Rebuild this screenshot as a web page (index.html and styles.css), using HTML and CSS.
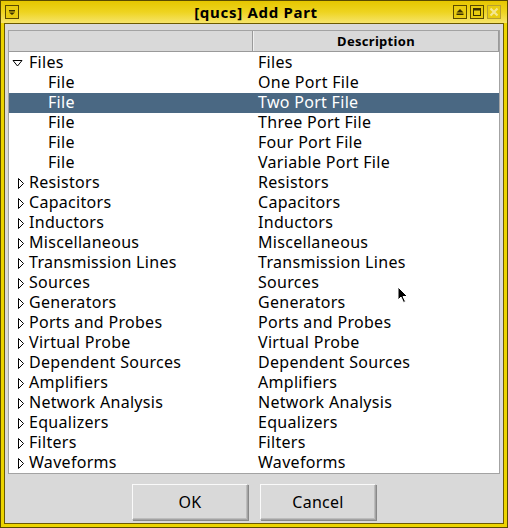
FILE: index.html
```html
<!DOCTYPE html>
<html>
<head>
<meta charset="utf-8">
<link rel="stylesheet" href="styles.css">
</head>
<body>
<div class="window">
  <div class="titlebar">
    <div class="tleft"><div class="tbtn"><svg width="12" height="12" viewBox="0 0 12 12"><rect x="3" y="4" width="6" height="1.5" fill="#3a3000"/><path d="M3 6.5 H9 L6 9 Z" fill="#3a3000"/></svg></div></div>
    <div class="title">[qucs] Add Part</div>
    <div class="tbtns">
      <div class="tbtn"><svg width="12" height="12" viewBox="0 0 12 12"><path d="M2.5 6.5 L6 3 L9.5 6.5 Z" fill="#3a3000"/><rect x="2.5" y="7.5" width="7" height="1.5" fill="#3a3000"/></svg></div>
      <div class="tbtn"><svg width="12" height="12" viewBox="0 0 12 12"><rect x="2.5" y="2.5" width="7" height="7" fill="none" stroke="#3a3000" stroke-width="1"/><rect x="2.5" y="2.5" width="7" height="2" fill="#3a3000"/></svg></div>
      <div class="tbtn close"><svg width="12" height="12" viewBox="0 0 12 12"><path d="M2.5 2.5 L9.5 9.5 M9.5 2.5 L2.5 9.5" stroke="#f4e690" stroke-width="2.2"/></svg></div>
    </div>
  </div>
  <div class="client">
    <div class="tree">
      <div class="header">
        <div class="hcell c1"></div>
        <div class="hcell c2">Description</div>
      </div>
      <div class="rows">
        <div class="row"><div class="c1"><span class="arrow"><svg width="11" height="8" viewBox="0 0 11 8"><path d="M1 1.5 H10 L5.5 7 Z" fill="none" stroke="#000" stroke-width="1"/></svg></span><span class="lbl">Files</span></div><div class="c2">Files</div></div>
        <div class="row child"><div class="c1"><span class="lbl">File</span></div><div class="c2">One Port File</div></div>
        <div class="row child sel"><div class="c1"><span class="lbl">File</span></div><div class="c2">Two Port File</div></div>
        <div class="row child"><div class="c1"><span class="lbl">File</span></div><div class="c2">Three Port File</div></div>
        <div class="row child"><div class="c1"><span class="lbl">File</span></div><div class="c2">Four Port File</div></div>
        <div class="row child"><div class="c1"><span class="lbl">File</span></div><div class="c2">Variable Port File</div></div>
        <div class="row closed"><div class="c1"><span class="arrow"><svg width="6" height="11" viewBox="0 0 6 11"><path d="M0.5 0.5 V10.5 L5.5 5.5 Z" fill="none" stroke="#000" stroke-width="1"/></svg></span><span class="lbl">Resistors</span></div><div class="c2">Resistors</div></div>
        <div class="row closed"><div class="c1"><span class="arrow"><svg width="6" height="11" viewBox="0 0 6 11"><path d="M0.5 0.5 V10.5 L5.5 5.5 Z" fill="none" stroke="#000" stroke-width="1"/></svg></span><span class="lbl">Capacitors</span></div><div class="c2">Capacitors</div></div>
        <div class="row closed"><div class="c1"><span class="arrow"><svg width="6" height="11" viewBox="0 0 6 11"><path d="M0.5 0.5 V10.5 L5.5 5.5 Z" fill="none" stroke="#000" stroke-width="1"/></svg></span><span class="lbl">Inductors</span></div><div class="c2">Inductors</div></div>
        <div class="row closed"><div class="c1"><span class="arrow"><svg width="6" height="11" viewBox="0 0 6 11"><path d="M0.5 0.5 V10.5 L5.5 5.5 Z" fill="none" stroke="#000" stroke-width="1"/></svg></span><span class="lbl">Miscellaneous</span></div><div class="c2">Miscellaneous</div></div>
        <div class="row closed"><div class="c1"><span class="arrow"><svg width="6" height="11" viewBox="0 0 6 11"><path d="M0.5 0.5 V10.5 L5.5 5.5 Z" fill="none" stroke="#000" stroke-width="1"/></svg></span><span class="lbl">Transmission Lines</span></div><div class="c2">Transmission Lines</div></div>
        <div class="row closed"><div class="c1"><span class="arrow"><svg width="6" height="11" viewBox="0 0 6 11"><path d="M0.5 0.5 V10.5 L5.5 5.5 Z" fill="none" stroke="#000" stroke-width="1"/></svg></span><span class="lbl">Sources</span></div><div class="c2">Sources</div></div>
        <div class="row closed"><div class="c1"><span class="arrow"><svg width="6" height="11" viewBox="0 0 6 11"><path d="M0.5 0.5 V10.5 L5.5 5.5 Z" fill="none" stroke="#000" stroke-width="1"/></svg></span><span class="lbl">Generators</span></div><div class="c2">Generators</div></div>
        <div class="row closed"><div class="c1"><span class="arrow"><svg width="6" height="11" viewBox="0 0 6 11"><path d="M0.5 0.5 V10.5 L5.5 5.5 Z" fill="none" stroke="#000" stroke-width="1"/></svg></span><span class="lbl">Ports and Probes</span></div><div class="c2">Ports and Probes</div></div>
        <div class="row closed"><div class="c1"><span class="arrow"><svg width="6" height="11" viewBox="0 0 6 11"><path d="M0.5 0.5 V10.5 L5.5 5.5 Z" fill="none" stroke="#000" stroke-width="1"/></svg></span><span class="lbl">Virtual Probe</span></div><div class="c2">Virtual Probe</div></div>
        <div class="row closed"><div class="c1"><span class="arrow"><svg width="6" height="11" viewBox="0 0 6 11"><path d="M0.5 0.5 V10.5 L5.5 5.5 Z" fill="none" stroke="#000" stroke-width="1"/></svg></span><span class="lbl">Dependent Sources</span></div><div class="c2">Dependent Sources</div></div>
        <div class="row closed"><div class="c1"><span class="arrow"><svg width="6" height="11" viewBox="0 0 6 11"><path d="M0.5 0.5 V10.5 L5.5 5.5 Z" fill="none" stroke="#000" stroke-width="1"/></svg></span><span class="lbl">Amplifiers</span></div><div class="c2">Amplifiers</div></div>
        <div class="row closed"><div class="c1"><span class="arrow"><svg width="6" height="11" viewBox="0 0 6 11"><path d="M0.5 0.5 V10.5 L5.5 5.5 Z" fill="none" stroke="#000" stroke-width="1"/></svg></span><span class="lbl">Network Analysis</span></div><div class="c2">Network Analysis</div></div>
        <div class="row closed"><div class="c1"><span class="arrow"><svg width="6" height="11" viewBox="0 0 6 11"><path d="M0.5 0.5 V10.5 L5.5 5.5 Z" fill="none" stroke="#000" stroke-width="1"/></svg></span><span class="lbl">Equalizers</span></div><div class="c2">Equalizers</div></div>
        <div class="row closed"><div class="c1"><span class="arrow"><svg width="6" height="11" viewBox="0 0 6 11"><path d="M0.5 0.5 V10.5 L5.5 5.5 Z" fill="none" stroke="#000" stroke-width="1"/></svg></span><span class="lbl">Filters</span></div><div class="c2">Filters</div></div>
        <div class="row closed"><div class="c1"><span class="arrow"><svg width="6" height="11" viewBox="0 0 6 11"><path d="M0.5 0.5 V10.5 L5.5 5.5 Z" fill="none" stroke="#000" stroke-width="1"/></svg></span><span class="lbl">Waveforms</span></div><div class="c2">Waveforms</div></div>
      </div>
      <svg class="cursor" width="14" height="20" viewBox="0 0 14 20"><path d="M1 1 L1 14 L4 11 L6.5 16.5 L8.5 15.5 L6 10.5 L10.5 10.5 Z" fill="#000" stroke="#fff" stroke-width="1"/></svg>
    </div>
    <div class="buttons">
      <div class="btn">OK</div>
      <div class="btn">Cancel</div>
    </div>
  </div>
</div>
</body>
</html>
```
FILE: styles.css
```css
html, body {
  margin: 0;
  padding: 0;
  width: 508px;
  height: 528px;
  overflow: hidden;
  background: #d9d9d9;
}
.window {
  box-sizing: border-box;
  width: 508px;
  height: 528px;
  border: 1px solid #5a4a00;
  background: #ecd400;
  padding: 0 3px 3px 3px;
  display: flex;
  flex-direction: column;
  font-family: "Noto Sans", "DejaVu Sans", sans-serif;
}
.titlebar {
  height: 22px;
  flex: none;
  margin: 0 -3px;
  padding: 0 6px 0 4px;
  display: grid;
  grid-template-columns: 60px 1fr 60px;
  align-items: center;
  background: linear-gradient(to bottom, #e6c600 0%, #eed420 50%, #f6e46a 100%);
}
.tleft {
  display: flex;
}
.title {
  text-align: center;
  font-weight: bold;
  font-size: 15px;
  letter-spacing: 0.7px;
  color: #000;
  padding-left: 6px;
}
.tbtns {
  display: flex;
  gap: 3px;
  justify-content: flex-end;
}
.tbtn {
  width: 12px;
  height: 12px;
  border: 1px solid #5a4a00;
  background: #e8cc10;
  display: flex;
  align-items: center;
  justify-content: center;
}
.tbtn svg {
  flex: none;
  display: block;
}
.tbtn.close {
  border-color: #b8a030;
}
.client {
  flex: 1;
  border: 1px solid #6b5a00;
  background: #d9d9d9;
  display: flex;
  flex-direction: column;
  padding: 6px 3px 0 3px;
}
.tree {
  position: relative;
  flex: none;
  height: 442px;
  border: 1px solid #a3a3a3;
  background: #fff;
  overflow: hidden;
  font-size: 16px;
  letter-spacing: 0.3px;
  color: #000;
}
.header {
  display: flex;
  height: 20px;
  background: #d9d9d9;
  border-bottom: 1px solid #9a9a9a;
}
.hcell {
  box-sizing: border-box;
  border-right: 1px solid #9a9a9a;
  border-left: 1px solid #f0f0f0;
}
.hcell.c1 {
  width: 244px;
  border-left: none;
}
.hcell.c2 {
  flex: 1;
  text-align: center;
  font-weight: bold;
  font-size: 13px;
  letter-spacing: 0.3px;
  line-height: 20px;
}
.rows {
  padding-top: 1px;
}
.row {
  display: flex;
  height: 20px;
  line-height: 19px;
  white-space: nowrap;
}
.row .c1 {
  width: 244px;
  position: relative;
  padding-left: 20px;
  box-sizing: border-box;
}
.row .c2 {
  flex: 1;
  padding-left: 5px;
}
.row.child .c1 {
  padding-left: 39px;
}
.row.sel {
  background: #4a6883;
  color: #fff;
}
.arrow {
  position: absolute;
  top: 0;
  height: 20px;
  display: flex;
  align-items: center;
}
.row .c1 .arrow {
  left: 3px;
}
.row.closed .c1 .arrow {
  left: 9px;
}
.arrow svg {
  display: block;
}
.cursor {
  position: absolute;
  left: 388px;
  top: 255px;
}
.buttons {
  flex: 1;
  display: flex;
  justify-content: center;
  align-items: flex-start;
  gap: 12px;
  padding-top: 10px;
}
.btn {
  box-sizing: border-box;
  width: 116px;
  height: 36px;
  border: 1px solid #a3a3a3;
  border-top-color: #fafafa;
  border-left-color: #fafafa;
  background: #d9d9d9;
  box-shadow: inset -1px -1px 0 #bcbcbc, 1px 1px 0 #888;
  display: flex;
  align-items: center;
  justify-content: center;
  font-size: 16px;
  letter-spacing: 0.25px;
  color: #000;
}
```
